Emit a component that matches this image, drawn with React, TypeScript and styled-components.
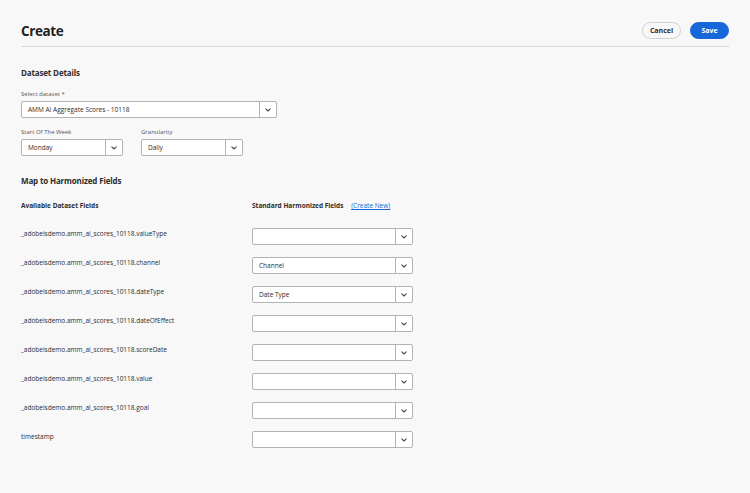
import React from "react";
import styled, { createGlobalStyle } from "styled-components";

const GlobalStyle = createGlobalStyle`
  html, body {
    margin: 0;
    padding: 0;
    background: #f8f8f8;
    font-family: "Open Sans", "Noto Sans", sans-serif;
    color: #2c2c2c;
  }
`;

const rows = [
  { field: "_adobeisdemo.amm_ai_scores_10118.valueType", value: "" },
  { field: "_adobeisdemo.amm_ai_scores_10118.channel", value: "Channel" },
  { field: "_adobeisdemo.amm_ai_scores_10118.dateType", value: "Date Type" },
  { field: "_adobeisdemo.amm_ai_scores_10118.dateOfEffect", value: "" },
  { field: "_adobeisdemo.amm_ai_scores_10118.scoreDate", value: "" },
  { field: "_adobeisdemo.amm_ai_scores_10118.value", value: "" },
  { field: "_adobeisdemo.amm_ai_scores_10118.goal", value: "" },
  { field: "timestamp", value: "" },
];

const Chevron = () => (
  <svg width="6" height="4" viewBox="0 0 6 4">
    <path d="M0.8 0.9 L3 3 L5.2 0.9" fill="none" stroke="#4b4b4b" strokeWidth="1.1" strokeLinecap="round" strokeLinejoin="round" />
  </svg>
);

const Picker = ({ value, width }: { value: string; width: number }) => (
  <PickerBox $width={width}>
    <PickerValue>{value}</PickerValue>
    <PickerButton>
      <Chevron />
    </PickerButton>
  </PickerBox>
);

const App = () => {
  return (
    <>
      <GlobalStyle />
      <Page>
        <Header>
          <Title>Create</Title>
          <Actions>
            <CancelBtn>Cancel</CancelBtn>
            <SaveBtn>Save</SaveBtn>
          </Actions>
        </Header>

        <SectionTitle $top={20} $bottom={12}>Dataset Details</SectionTitle>
        <Field>
          <Label>
            Select dataset <Star>*</Star>
          </Label>
          <Picker value="AMM AI Aggregate Scores - 10118" width={256} />
        </Field>
        <FieldRow>
          <Field>
            <Label>Start Of The Week</Label>
            <Picker value="Monday" width={102} />
          </Field>
          <Field>
            <Label>Granularity</Label>
            <Picker value="Daily" width={102} />
          </Field>
        </FieldRow>

        <SectionTitle $top={9} $bottom={15}>Map to Harmonized Fields</SectionTitle>
        <MapGrid>
          <ColHead>Available Dataset Fields</ColHead>
          <ColHead>
            Standard Harmonized Fields <CreateLink>(Create New)</CreateLink>
          </ColHead>
          {rows.map((r) => (
            <React.Fragment key={r.field}>
              <FieldName>{r.field}</FieldName>
              <Picker value={r.value} width={161} />
            </React.Fragment>
          ))}
        </MapGrid>
      </Page>
    </>
  );
};

const Page = styled.div`
  padding: 22px 21px 0 21px;
  box-sizing: border-box;
  width: 750px;
  height: 493px;
`;

const Header = styled.div`
  display: flex;
  justify-content: space-between;
  align-items: center;
  height: 17px;
  padding-bottom: 7px;
  border-bottom: 1.5px solid #d8d8d8;
`;

const Title = styled.h1`
  margin: 0;
  font-size: 13.5px;
  font-weight: 700;
  color: #1f1f1f;
  letter-spacing: -0.4px;
`;

const Actions = styled.div`
  display: flex;
  gap: 9px;
`;

const BaseBtn = styled.button`
  height: 17px;
  width: 39px;
  border-radius: 9px;
  font-family: inherit;
  font-size: 7px;
  font-weight: 700;
  padding: 0;
  display: flex;
  align-items: center;
  justify-content: center;
`;

const CancelBtn = styled(BaseBtn)`
  background: #f8f8f8;
  border: 1px solid #d0d0d0;
  color: #2c2c2c;
`;

const SaveBtn = styled(BaseBtn)`
  background: #1767da;
  border: 1px solid #1767da;
  color: #ffffff;
`;

const SectionTitle = styled.h2<{ $top: number; $bottom: number }>`
  margin: ${(p) => p.$top}px 0 ${(p) => p.$bottom}px 0;
  font-size: 8px;
  font-weight: 700;
  color: #2c2c2c;
  letter-spacing: -0.15px;
`;

const Field = styled.div`
  display: flex;
  flex-direction: column;
  margin-bottom: 10px;
`;

const FieldRow = styled.div`
  display: flex;
  gap: 18px;
`;

const Label = styled.div`
  font-size: 6px;
  color: #555;
  margin-bottom: 3px;
  line-height: 8px;
`;

const Star = styled.span`
  font-size: 6px;
  color: #555;
`;

const PickerBox = styled.div<{ $width: number }>`
  width: ${(p) => p.$width}px;
  height: 17px;
  box-sizing: border-box;
  border: 1px solid #b3b3b3;
  border-radius: 2px;
  background: #ffffff;
  display: flex;
  align-items: stretch;
`;

const PickerValue = styled.div`
  flex: 1;
  display: flex;
  align-items: center;
  padding-left: 6px;
  font-size: 6.5px;
  color: #2c2c2c;
`;

const PickerButton = styled.div`
  width: 16px;
  border-left: 1px solid #b3b3b3;
  display: flex;
  align-items: center;
  justify-content: center;
`;

const MapGrid = styled.div`
  display: grid;
  grid-template-columns: 231px 161px;
  row-gap: 12px;
  align-items: start;
`;

const ColHead = styled.div`
  font-size: 6.5px;
  font-weight: 700;
  color: #2c2c2c;
  margin-bottom: 6px;
`;

const CreateLink = styled.span`
  color: #1767da;
  font-weight: 400;
  text-decoration: underline;
  margin-left: 6px;
`;

const FieldName = styled.div`
  font-size: 6.5px;
  color: #2c2c2c;
  line-height: 10px;
  padding-top: 1px;
`;

export default App;
